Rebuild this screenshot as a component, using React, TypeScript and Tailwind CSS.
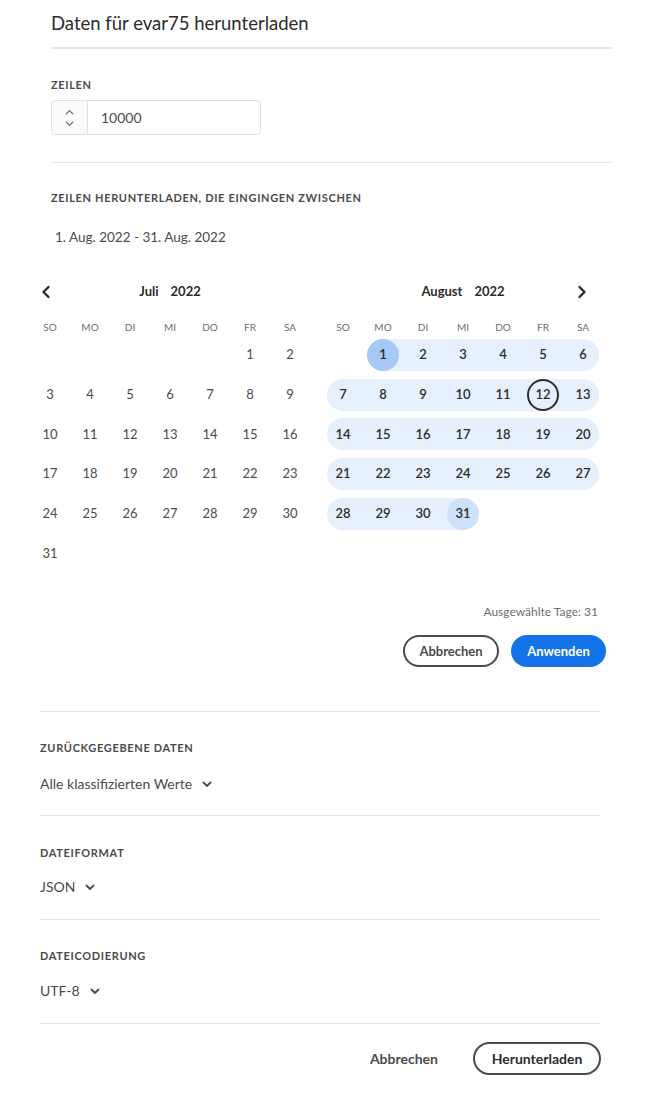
import React from 'react';

const FONT = "font-['Lato','Noto_Sans',sans-serif]";
const WEEKDAYS = ['SO', 'MO', 'DI', 'MI', 'DO', 'FR', 'SA'];

const ChevronDown = ({ className }: { className?: string }) => (
  <svg viewBox="0 0 10 10" className={className} fill="none" stroke="currentColor" strokeWidth="1.8" strokeLinecap="round" strokeLinejoin="round">
    <path d="M1.5 3.5 L5 7 L8.5 3.5" />
  </svg>
);

const Arrow = ({ dir }: { dir: 'left' | 'right' }) => (
  <svg viewBox="0 0 10 14" className="w-[10px] h-[14px]" fill="none" stroke="#2c2c2c" strokeWidth="2.4" strokeLinecap="round" strokeLinejoin="round">
    {dir === 'left' ? <path d="M7.5 2 L2.5 7 L7.5 12" /> : <path d="M2.5 2 L7.5 7 L2.5 12" />}
  </svg>
);

const Label = ({ children }: { children: React.ReactNode }) => (
  <div className="text-[11px] leading-[16px] font-bold tracking-[0.06em] text-[#4b4b4b] uppercase">{children}</div>
);

const July = () => {
  const cells: (number | null)[] = [null, null, null, null, null];
  for (let d = 1; d <= 31; d++) cells.push(d);
  return (
    <div className="w-[280px]">
      <div className="grid grid-cols-7 text-[10px] leading-[16px] text-[#6e6e6e]">
        {WEEKDAYS.map((w) => (
          <div key={w} className="text-center">{w}</div>
        ))}
      </div>
      <div className="grid grid-cols-7 gap-y-[7.7px] mt-1">
        {cells.map((d, i) => (
          <div key={i} className="h-8 flex items-center justify-center text-[13px] text-[#4b4b4b]">
            {d ?? ''}
          </div>
        ))}
      </div>
    </div>
  );
};

const August = () => {
  const cells: (number | null)[] = [null];
  for (let d = 1; d <= 31; d++) cells.push(d);
  return (
    <div className="w-[280px]">
      <div className="grid grid-cols-7 text-[10px] leading-[16px] text-[#6e6e6e]">
        {WEEKDAYS.map((w) => (
          <div key={w} className="text-center">{w}</div>
        ))}
      </div>
      <div className="grid grid-cols-7 gap-y-[7.7px] mt-1">
        {cells.map((d, i) => {
          if (d === null) return <div key={i} className="h-8" />;
          const col = i % 7;
          const isStart = col === 0 || d === 1;
          const isEnd = col === 6 || d === 31;
          const strip =
            'h-8 flex items-center bg-[#e5f0fc] ' +
            (isStart ? 'ml-1 rounded-l-full justify-start ' : '') +
            (isEnd ? 'mr-1 rounded-r-full justify-end ' : '') +
            (!isStart && !isEnd ? 'justify-center' : '');
          let circle = 'w-8 h-8 rounded-full flex items-center justify-center text-[13px] font-semibold text-[#2c2c2c]';
          if (d === 1) circle += ' bg-[#a6c8f4] font-bold';
          if (d === 31) circle += ' bg-[#cfe1f8] font-bold';
          if (d === 12) circle += ' border-2 border-[#2c2c2c]';
          return (
            <div key={i} className={strip}>
              <div className={circle}>{d}</div>
            </div>
          );
        })}
      </div>
    </div>
  );
};

const Dropdown = ({ value }: { value: string }) => (
  <div className="flex items-center gap-[10px] text-[14px] leading-[20px] text-[#4b4b4b]">
    <span>{value}</span>
    <ChevronDown className="w-[10px] h-[10px] text-[#4b4b4b]" />
  </div>
);

export default function App() {
  return (
    <div className={`w-[670px] min-h-[1096px] bg-white ${FONT} text-[#4b4b4b]`}>
      <div className="pl-[51px] pr-[58px]">
        <div className="pt-[11px] pb-[12px] text-[18.5px] leading-[24px] text-[#2c2c2c] border-b-2 border-[#e6e6e6]">
          Daten für evar75 herunterladen
        </div>

        <div className="mt-[28px]">
          <Label>Zeilen</Label>
          <div className="mt-[7px] w-[210px] h-[35px] flex border border-[#e1e1e1] rounded-[4px] overflow-hidden">
            <div className="w-[36px] flex flex-col items-center justify-center gap-[6px] border-r border-[#e1e1e1] bg-[#fbfbfb] text-[#6e6e6e]">
              <svg viewBox="0 0 10 6" className="w-[9px] h-[6px]" fill="none" stroke="currentColor" strokeWidth="1.4" strokeLinecap="round" strokeLinejoin="round">
                <path d="M1.5 5 L5 1.5 L8.5 5" />
              </svg>
              <svg viewBox="0 0 10 6" className="w-[9px] h-[6px]" fill="none" stroke="currentColor" strokeWidth="1.4" strokeLinecap="round" strokeLinejoin="round">
                <path d="M1.5 1 L5 4.5 L8.5 1" />
              </svg>
            </div>
            <div className="flex items-center pl-[13px] text-[14px] text-[#4b4b4b]">10000</div>
          </div>
        </div>

        <div className="mt-[27px] border-b border-[#e6e6e6]" />

        <div className="mt-[27px]">
          <Label>Zeilen herunterladen, die eingingen zwischen</Label>
          <div className="mt-[21px] pl-[4px] text-[13.5px] leading-[20px] text-[#4b4b4b]">1. Aug. 2022 - 31. Aug. 2022</div>
        </div>
      </div>

      {/* calendar */}
      <div className="mt-[35px] pl-[30px] w-[633px]">
        <div className="flex gap-[13px]">
          <div className="w-[280px] h-[20px] flex items-center">
            <div className="w-[30px] pl-[11px] flex items-center">
              <Arrow dir="left" />
            </div>
            <div className="flex-1 flex justify-center gap-[12px] text-[13px] font-bold text-[#2c2c2c] pr-[30px]">
              <span>Juli</span>
              <span>2022</span>
            </div>
          </div>
          <div className="w-[280px] h-[20px] flex items-center">
            <div className="flex-1 flex justify-center gap-[12px] text-[13px] font-bold text-[#2c2c2c] pl-[30px]">
              <span>August</span>
              <span>2022</span>
            </div>
            <div className="w-[30px] pl-[4px] flex items-center">
              <Arrow dir="right" />
            </div>
          </div>
        </div>
        <div className="mt-[17px] flex gap-[13px] items-start">
          <July />
          <August />
        </div>
      </div>

      <div className="pr-[64px] flex flex-col items-end">
        <div className="mt-[35px] mr-[8px] text-[12px] leading-[16px] text-[#6e6e6e]">Ausgewählte Tage: 31</div>
        <div className="mt-[15px] flex gap-[12px]">
          <button className="w-[96px] h-[32px] rounded-full border-2 border-[#4b4b4b] text-[13px] font-bold text-[#4b4b4b]">
            Abbrechen
          </button>
          <button className="w-[95px] h-[32px] rounded-full bg-[#1473e6] text-[13px] font-bold text-white">
            Anwenden
          </button>
        </div>
      </div>

      <div className="mt-[44px] pl-[40px] pr-[69px]">
        <div className="border-t border-[#e6e6e6]" />
        <div className="mt-[28px]">
          <Label>Zurückgegebene Daten</Label>
          <div className="mt-[18px]">
            <Dropdown value="Alle klassifizierten Werte" />
          </div>
        </div>
        <div className="mt-[21px] border-t border-[#e6e6e6]" />
        <div className="mt-[29px]">
          <Label>Dateiformat</Label>
          <div className="mt-[16px]">
            <Dropdown value="JSON" />
          </div>
        </div>
        <div className="mt-[22px] border-t border-[#e6e6e6]" />
        <div className="mt-[28px]">
          <Label>Dateicodierung</Label>
          <div className="mt-[17px]">
            <Dropdown value="UTF-8" />
          </div>
        </div>
        <div className="mt-[22px] border-t border-[#e6e6e6]" />
        <div className="mt-[18px] flex justify-end items-center gap-[19px]">
          <button className="h-[33px] px-[16px] text-[14px] font-bold text-[#4b4b4b]">Abbrechen</button>
          <button className="w-[128px] h-[33px] rounded-full border-2 border-[#4b4b4b] text-[14px] font-bold text-[#2c2c2c]">
            Herunterladen
          </button>
        </div>
      </div>
    </div>
  );
}
